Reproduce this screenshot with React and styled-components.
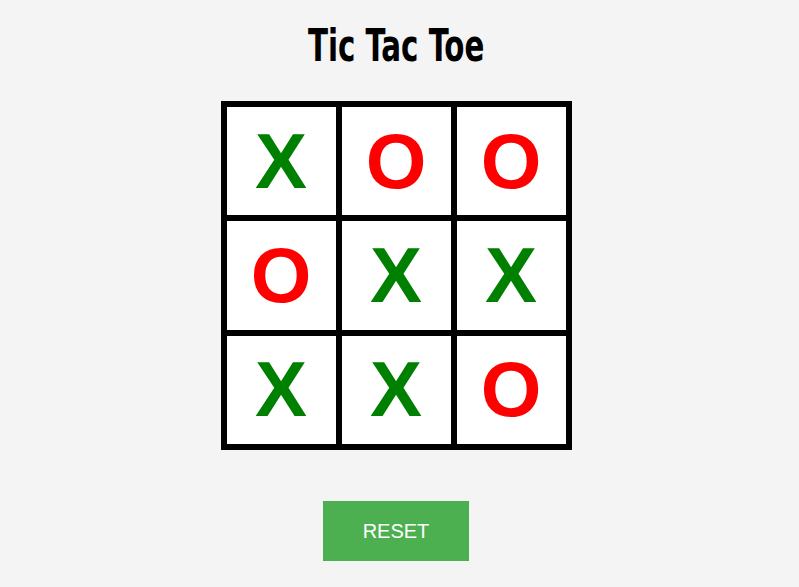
import React, { useState } from 'react';
import styled, { createGlobalStyle } from 'styled-components';

const GlobalStyle = createGlobalStyle`
  body {
    margin: 0;
    background: #f4f4f4;
    font-family: "Liberation Sans", Arial, sans-serif;
  }
`;

const initial = ['X', 'O', 'O', 'O', 'X', 'X', 'X', 'X', 'O'];

export default function App() {
  const [cells, setCells] = useState(initial);

  return (
    <Page>
      <GlobalStyle />
      <Title>Tic Tac Toe</Title>
      <Board>
        {cells.map((v, i) => (
          <Cell key={i} $mark={v}>{v}</Cell>
        ))}
      </Board>
      <ResetButton onClick={() => setCells(Array(9).fill(''))}>RESET</ResetButton>
    </Page>
  );
}

const Page = styled.div`
  display: flex;
  flex-direction: column;
  align-items: center;
  padding: 20px 7px 0 0;
`;

// condensed display face, squeezed to get the tall narrow look
const Title = styled.h1`
  margin: 0 0 29px;
  font-family: "DejaVu Sans Condensed", "Liberation Sans", sans-serif;
  font-weight: 700;
  font-size: 44px;
  line-height: 52px;
  color: #000;
  transform: scaleX(0.74);
`;

const Board = styled.div`
  display: grid;
  grid-template-columns: repeat(3, 109px);
  grid-template-rows: repeat(3, 108.4px);
  gap: 6px;
  padding: 6px;
  background: #000;
`;

const Cell = styled.div`
  display: flex;
  align-items: center;
  justify-content: center;
  background: #fff;
  font-family: "Liberation Sans", Arial, sans-serif;
  font-weight: 700;
  font-size: 78px;
  color: ${p => (p.$mark === 'X' ? '#008000' : '#ff0000')};
  cursor: pointer;
`;

const ResetButton = styled.button`
  margin-top: 51px;
  width: 146px;
  height: 60px;
  border: none;
  background: #4caf50;
  color: #fff;
  font-family: "Liberation Sans", Arial, sans-serif;
  font-size: 20px;
  cursor: pointer;
`;
